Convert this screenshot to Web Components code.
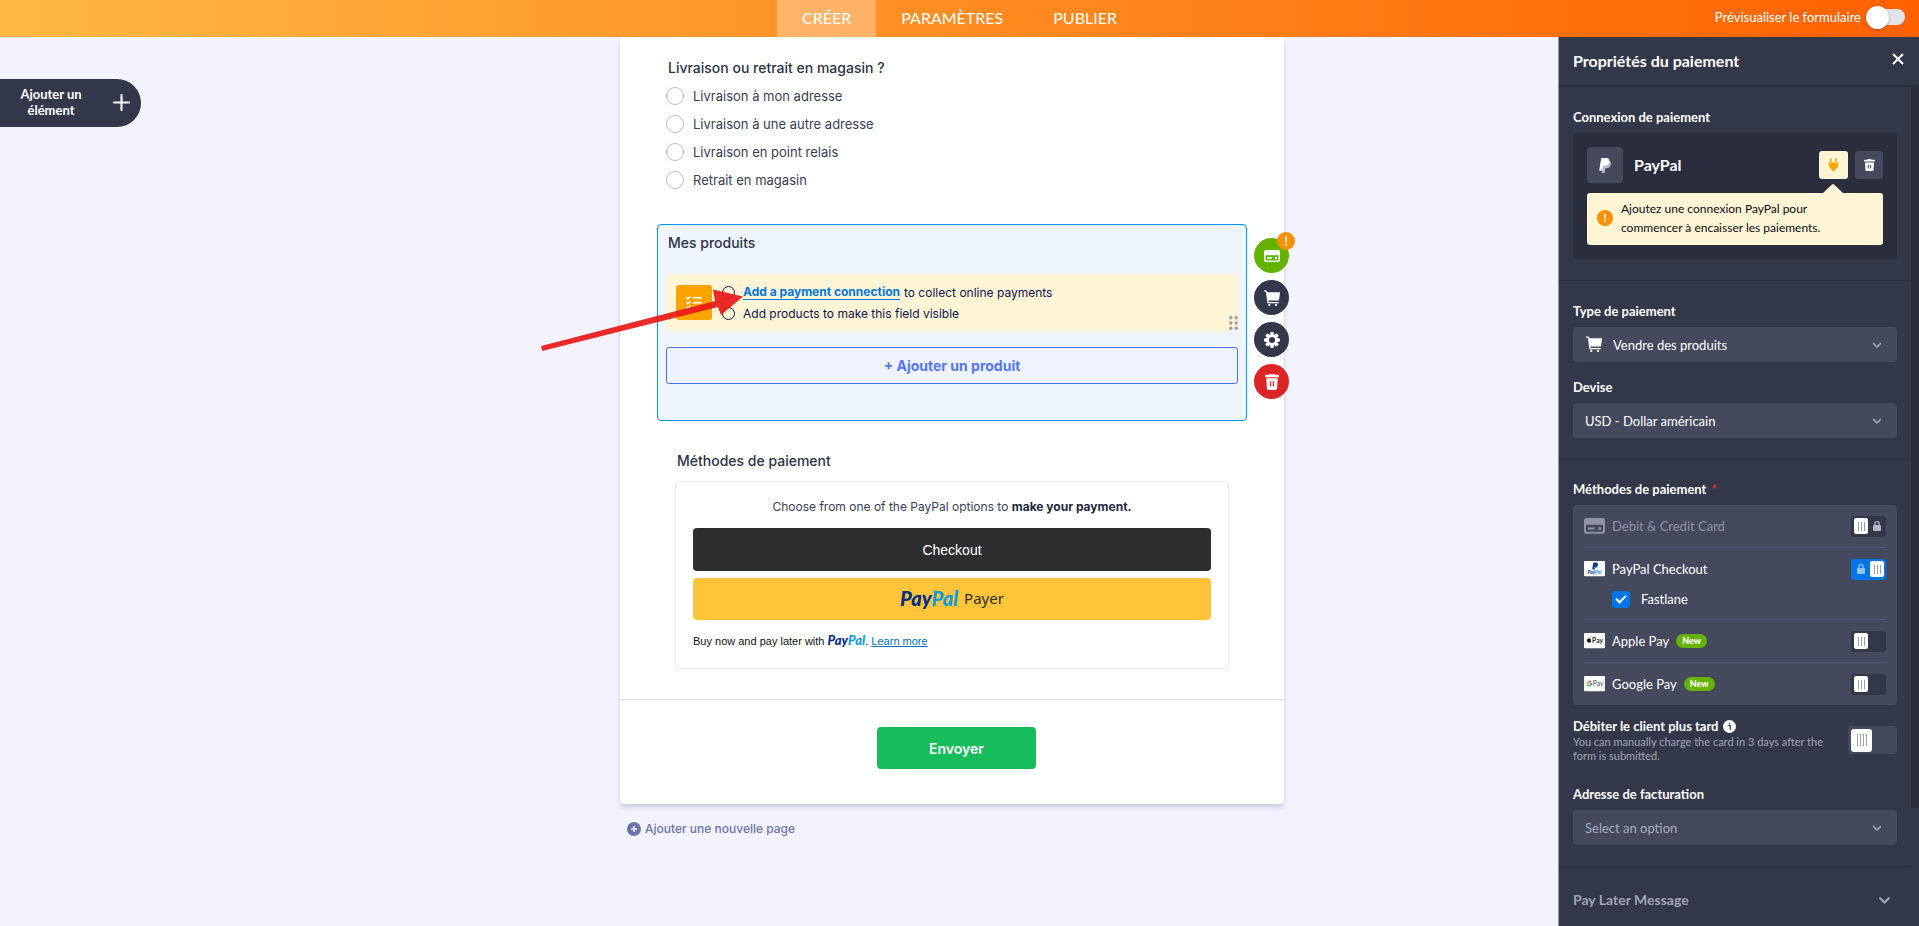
<!DOCTYPE html>
<html lang="fr">
<head>
<meta charset="utf-8">
<meta name="viewport" content="width=device-width, initial-scale=1">
<title>Créer le formulaire</title>
<style>
    html, body {
        height: 100%;
        margin: 0;
    }
    body {
        overflow: hidden;
        font-family: Inter, "Liberation Sans", sans-serif;
        background: #f3f3fe;
    }
</style>
</head>
<body>
<form-builder></form-builder>

<script>
const ICONS = {
    plus: `<svg viewBox="0 0 16 16"><path d="M8 1v14M1 8h14" fill="none" stroke="currentColor" stroke-width="2" stroke-linecap="round"/></svg>`,
    close: `<svg viewBox="0 0 12 12"><path d="M1 1l10 10M11 1L1 11" fill="none" stroke="currentColor" stroke-width="2"/></svg>`,
    chevron: `<svg viewBox="0 0 12 8"><path d="M2 2l4 4 4-4" fill="none" stroke="currentColor" stroke-width="2" stroke-linecap="round" stroke-linejoin="round"/></svg>`,
    card: `<svg viewBox="0 0 16 12"><path fill="currentColor" fill-rule="evenodd" d="M2 0h12a2 2 0 0 1 2 2v8a2 2 0 0 1-2 2H2a2 2 0 0 1-2-2V2a2 2 0 0 1 2-2zM1.500 5.200v4.300a1 1 0 0 0 1 1h11a1 1 0 0 0 1-1V5.200zM3 7.200h5v1.500H3zM11 7h2v2h-2z"/></svg>`,
    cart: `<svg viewBox="0 0 16 16"><path d="M.6.8l1.900.5L4 12.600h10.300" fill="none" stroke="currentColor" stroke-width="1.300" stroke-linejoin="round" stroke-linecap="round"/><path d="M2.600 2.200H15.400a.6.6 0 0 1 .6.700L15 9.700a1 1 0 0 1-1 .9H3.900z" fill="currentColor"/><circle cx="5.300" cy="14.900" r="1.100" fill="currentColor"/><circle cx="12" cy="14.900" r="1.100" fill="currentColor"/></svg>`,
    gear: `<svg viewBox="0 0 16 16"><g fill="currentColor"><circle cx="8" cy="8" r="6"/><rect x="6.200" width="3.600" height="16" rx="1.200"/><rect x="6.200" width="3.600" height="16" rx="1.200" transform="rotate(45 8 8)"/><rect x="6.200" width="3.600" height="16" rx="1.200" transform="rotate(90 8 8)"/><rect x="6.200" width="3.600" height="16" rx="1.200" transform="rotate(135 8 8)"/></g><circle cx="8" cy="8" r="3" fill="#33374a"/></svg>`,
    trash: `<svg viewBox="0 0 14 16"><path fill="currentColor" fill-rule="evenodd" d="M5 0h4l.6.8H13a.8.8 0 0 1 .8.8v1.600H.2V1.600A.8.8 0 0 1 1 .8h3.400zM1.300 4.300h11.400l-.6 10a2 2 0 0 1-2 1.700H3.900a2 2 0 0 1-2-1.700zM4.900 7.200v5h1.300v-5zM7.800 7.200v5h1.300v-5z"/></svg>`,
    plug: `<svg viewBox="0 0 12 15"><path fill="currentColor" d="M2.500.8a.8.8 0 0 1 1.600 0V4H2.500zM7.900.8a.8.8 0 0 1 1.600 0V4H7.900zM.6 4.800h10.800a.6.6 0 0 1 .2 1.200L10.800 6.400v2.200c0 1.700-1.300 3-2.800 3.400L6.900 14.300a1 1 0 0 1-1.800 0L4 12C2.500 11.600 1.200 10.300 1.200 8.600V6.400L.4 6a.6.6 0 0 1 .2-1.200z"/></svg>`,
    lock: `<svg viewBox="0 0 8 10"><path fill="currentColor" d="M0 5a1 1 0 0 1 1-1h6a1 1 0 0 1 1 1v4a1 1 0 0 1-1 1H1a1 1 0 0 1-1-1z"/><path d="M1.900 5V2.800a2.100 2.100 0 0 1 4.200 0V5" fill="none" stroke="currentColor" stroke-width="1.300"/></svg>`,
    alert: `<svg viewBox="0 0 18 18"><circle cx="9" cy="9" r="9" fill="#f99100"/><path d="M8 4.500h2l-.4 5.800H8.400z" fill="#fff"/><circle cx="9" cy="12.700" r="1.100" fill="#fff"/></svg>`,
    info: `<svg viewBox="0 0 14 14"><circle cx="7" cy="7" r="7" fill="#fff"/><path d="M5.600 6h2.200v4.500M7 3.200v1.600" fill="none" stroke="#44495e" stroke-width="1.500"/></svg>`,
    addPage: `<svg viewBox="0 0 14 14"><circle cx="7" cy="7" r="7" fill="currentColor"/><path d="M7 4v6M4 7h6" stroke="#f3f3fe" stroke-width="1.500"/></svg>`,
    list: `<svg viewBox="0 0 16 13"><g fill="none" stroke="currentColor" stroke-width="1.500" stroke-linecap="round" stroke-linejoin="round"><path d="M.8 1.800l1 1L4 .8M.8 6.800l1 1L4 5.800M.8 11.400l1 1L4 10.400M7 1.800h8.200M7 6.800h8.200M7 11.600h8.200"/></g></svg>`,
    dots: `<svg viewBox="0 0 9 14"><g fill="#9d9fb0"><circle cx="1.800" cy="1.800" r="1.700"/><circle cx="7.200" cy="1.800" r="1.700"/><circle cx="1.800" cy="7" r="1.700"/><circle cx="7.200" cy="7" r="1.700"/><circle cx="1.800" cy="12.200" r="1.700"/><circle cx="7.200" cy="12.200" r="1.700"/></g></svg>`,
    paypal: `<svg viewBox="0 0 12 15"><path fill="#b9bcc9" d="M5 3h4.500C11.500 3 12.300 4.600 11.900 6.600 11.400 9 9.800 10.200 7.500 10.200H6.300L5.500 15H2.800z"/><path fill="#fff" d="M2.600 0h4.700c2.400 0 3.500 1.400 3.100 3.700C9.900 6.500 8.300 7.600 5.800 7.600H4.300L3.300 12.800H.2L2.100.5C2.100.2 2.300 0 2.600 0z"/></svg>`,
    logoPaypal: `<svg viewBox="0 0 22 16"><rect width="22" height="16" rx="1" fill="#fff"/><path fill="#1f9ad6" d="M11 4h2.600c1.400.6 1.100 3.200-1.600 3.400L11.500 9.600H9.700z"/><path fill="#1b3a80" d="M9.700 1.600h2.900c1.700 0 2.300 1 2 2.300-.3 1.500-1.400 2-2.800 2h-.9L10.400 8.700H8.600z"/><text x="11" y="14" text-anchor="middle" font-family="Lato, sans-serif" font-size="5" font-weight="900" font-style="italic" fill="#1b3a80">Pay<tspan fill="#1f9ad6">Pal</tspan></text></svg>`,
    logoApple: `<svg viewBox="0 0 22 16"><rect width="22" height="16" rx="1" fill="#fff"/><path fill="#111" d="M5.900 4.400c.2-.5.600-.8 1-.9 0 .6-.4 1.200-1 1.300zM3.200 7.600c0-1.500 1.300-2.200 2.300-1.700.7-.4 1.400-.3 1.900.3-.8.6-.7 1.800.2 2.300-.3.900-.9 1.900-1.500 1.700-.4-.2-.7-.2-1.100 0C4.100 10.400 3.200 9 3.200 7.600z"/><text x="8.500" y="10.400" font-family="Lato, sans-serif" font-size="7" font-weight="700" fill="#222">Pay</text></svg>`,
    logoGoogle: `<svg viewBox="0 0 22 16"><rect width="22" height="16" rx="1" fill="#fff"/><g fill="none" stroke-width="1.300"><path d="M7.400 6.500A2.300 2.300 0 0 0 3.700 6.900" stroke="#ea4335"/><path d="M3.700 6.900A2.300 2.300 0 0 0 3.700 9.100" stroke="#fbbc05"/><path d="M3.700 9.100A2.300 2.300 0 0 0 7.200 9.700" stroke="#34a853"/><path d="M7.200 9.700A2.300 2.300 0 0 0 8 8H5.700" stroke="#4285f4"/></g><text x="9.200" y="10.500" font-family="Lato, sans-serif" font-size="7" font-weight="400" fill="#444">Pay</text></svg>`
};

class AppIcon extends HTMLElement {
    constructor() {
        super();
        this.attachShadow({mode: "open"});
    }

    connectedCallback() {
        this.shadowRoot.innerHTML = `
            <style>
                :host {
                    display: inline-flex;
                    flex: none;
                    width: 16px;
                }
                svg {
                    display: block;
                    width: 100%;
                    height: auto;
                }
            </style>
            ${ICONS[this.getAttribute("name")]}`;
    }
}

class PaypalWordmark extends HTMLElement {
    constructor() {
        super();
        this.attachShadow({mode: "open"}).innerHTML = `
            <style>
                :host {
                    display: inline-block;
                    font-family: Lato, sans-serif;
                    font-weight: 900;
                    font-style: italic;
                    color: #012f86;
                }
                span {
                    color: #0f9bdc;
                }
            </style>Pay<span>Pal</span>`;
    }
}

class BuilderHeader extends HTMLElement {
    constructor() {
        super();
        this.attachShadow({mode: "open"}).innerHTML = `
            <style>
                :host {
                    display: grid;
                    grid-template-columns: 1fr auto 1fr;
                    height: 37px;
                    font-family: Lato, sans-serif;
                    color: #fff;
                    background: linear-gradient(90deg, #ffb843, #ff6100);
                }
                nav {
                    grid-column: 2;
                    display: flex;
                }
                a {
                    display: flex;
                    align-items: center;
                    padding: 0 25px 3px;
                    font-size: 16px;
                    color: inherit;
                    text-decoration: none;
                }
                a[aria-current] {
                    background: rgba(255, 255, 255, 0.3);
                }
                label {
                    display: flex;
                    align-items: center;
                    justify-content: flex-end;
                    gap: 5px;
                    padding: 0 14px 3px 0;
                    font-size: 13px;
                }
                input {
                    appearance: none;
                    display: flex;
                    align-items: center;
                    width: 35px;
                    height: 16px;
                    margin: 0 0 0 4px;
                    border-radius: 8px;
                    background: #e3e3ea;
                }
                input::before {
                    content: "";
                    flex: none;
                    width: 23px;
                    height: 23px;
                    margin-left: -4px;
                    border-radius: 50%;
                    background: #fff;
                    box-shadow: 0 1px 3px rgba(0, 0, 0, 0.3);
                }
            </style>
            <nav>
                <a href="#creer" aria-current="page">CRÉER</a>
                <a href="#parametres">PARAMÈTRES</a>
                <a href="#publier">PUBLIER</a>
            </nav>
            <label>Prévisualiser le formulaire <input type="checkbox" role="switch"></label>`;
    }
}

class AddElementButton extends HTMLElement {
    constructor() {
        super();
        this.attachShadow({mode: "open"}).innerHTML = `
            <style>
                :host {
                    display: block;
                }
                button {
                    display: flex;
                    align-items: center;
                    gap: 20px;
                    height: 48px;
                    padding: 0 11px 2px 9px;
                    border: 0;
                    border-radius: 0 24px 24px 0;
                    font: 700 13px/16px Lato, sans-serif;
                    color: #fff;
                    background: #33374a;
                }
                span {
                    width: 84px;
                }
                app-icon {
                    width: 17px;
                }
            </style>
            <button type="button"><span>Ajouter un élément</span><app-icon name="plus"></app-icon></button>`;
    }
}

class ChoiceQuestion extends HTMLElement {
    constructor() {
        super();
        this.attachShadow({mode: "open"});
    }

    connectedCallback() {
        const options = this.getAttribute("options").split("|");
        this.shadowRoot.innerHTML = `
            <style>
                :host {
                    display: block;
                    padding: 0 9px;
                }
                fieldset {
                    margin: 0;
                    padding: 0;
                    border: 0;
                }
                legend {
                    padding: 0 0 4px 2px;
                    font-size: 14px;
                    font-weight: 500;
                    line-height: 20px;
                    color: #2c3345;
                }
                label {
                    display: flex;
                    align-items: center;
                    gap: 9px;
                    height: 28px;
                    font-size: 13px;
                    color: #3a4052;
                }
                input {
                    appearance: none;
                    box-sizing: border-box;
                    width: 18px;
                    height: 18px;
                    margin: 0;
                    border: 1px solid #b8bdcc;
                    border-radius: 50%;
                    background: #fff;
                }
            </style>
            <fieldset>
                <legend>${this.getAttribute("question")}</legend>
                ${options.map(option => `<label><input type="radio" name="choice"><span>${option}</span></label>`).join("")}
            </fieldset>`;
    }
}

class FieldTool extends HTMLElement {
    constructor() {
        super();
        this.attachShadow({mode: "open"});
    }

    connectedCallback() {
        this.shadowRoot.innerHTML = `
            <style>
                :host {
                    display: block;
                    position: relative;
                }
                button {
                    display: flex;
                    align-items: center;
                    justify-content: center;
                    width: 35px;
                    height: 35px;
                    padding: 0;
                    border: 0;
                    border-radius: 50%;
                    color: #fff;
                    background: var(--tool-color, #33374a);
                }
                button app-icon {
                    width: var(--tool-icon, 16px);
                }
                ::slotted(app-icon) {
                    position: absolute;
                    top: -6px;
                    right: -6px;
                    width: 18px;
                }
            </style>
            <button type="button" aria-label="${this.getAttribute("label")}"><app-icon name="${this.getAttribute("icon")}"></app-icon></button>
            <slot></slot>`;
    }
}

class ProductField extends HTMLElement {
    constructor() {
        super();
        this.attachShadow({mode: "open"}).innerHTML = `
            <style>
                :host {
                    display: block;
                    position: relative;
                    box-sizing: border-box;
                    padding: 8px 8px 36px;
                    border: 1px solid #0099ff;
                    border-radius: 4px;
                    background: #eef5ff;
                }
                h2 {
                    margin: 0 2px 21px;
                    font-size: 14px;
                    font-weight: 500;
                    line-height: 20px;
                    color: #2c3345;
                }
                .notice {
                    position: relative;
                    display: flex;
                    align-items: center;
                    height: 57px;
                    padding-left: 10px;
                    border-radius: 4px;
                    background: #fff4d3;
                }
                .badge {
                    display: flex;
                    align-items: center;
                    justify-content: center;
                    width: 36px;
                    height: 35px;
                    border-radius: 3px;
                    color: #fff;
                    background: #fba400;
                }
                ul {
                    margin: 0;
                    padding: 0 0 0 10px;
                    list-style: none;
                }
                li {
                    display: flex;
                    align-items: center;
                    height: 21px;
                    font-size: 12px;
                    color: #0a1551;
                }
                li::before {
                    content: "";
                    box-sizing: border-box;
                    width: 13px;
                    height: 13px;
                    margin-right: 8px;
                    border: 1px solid #0a1551;
                    border-radius: 50%;
                }
                a {
                    margin-right: 4px;
                    border-bottom: 1px solid #0075e3;
                    font-weight: 700;
                    color: #0075e3;
                    text-decoration: none;
                }
                .grip {
                    position: absolute;
                    right: 0;
                    bottom: 1px;
                    width: 9px;
                }
                .add {
                    display: block;
                    width: 100%;
                    height: 37px;
                    margin-top: 16px;
                    border: 1px solid #4573e3;
                    border-radius: 3px;
                    font: 700 14px Inter, sans-serif;
                    color: #5277ee;
                    background: #eef3ff;
                }
                .tools {
                    position: absolute;
                    top: 13px;
                    left: 100%;
                    display: grid;
                    gap: 7px;
                    margin-left: 8px;
                }
                .pay {
                    --tool-color: #64b200;
                }
                .remove {
                    --tool-color: #dc2626;
                    --tool-icon: 14px;
                }
                .arrow {
                    position: absolute;
                    top: 64px;
                    left: -117px;
                    width: 204px;
                    height: 64px;
                    pointer-events: none;
                }
            </style>
            <h2>Mes produits</h2>
            <div class="notice">
                <div class="badge"><app-icon name="list"></app-icon></div>
                <ul>
                    <li><a href="#connexion">Add a payment connection</a><span>to collect online payments</span></li>
                    <li>Add products to make this field visible</li>
                </ul>
                <app-icon class="grip" name="dots"></app-icon>
            </div>
            <button class="add" type="button">+ Ajouter un produit</button>
            <div class="tools">
                <field-tool class="pay" icon="card" label="Paiement"><app-icon name="alert"></app-icon></field-tool>
                <field-tool icon="cart" label="Produits"></field-tool>
                <field-tool icon="gear" label="Propriétés"></field-tool>
                <field-tool class="remove" icon="trash" label="Supprimer"></field-tool>
            </div>
            <svg class="arrow" viewBox="0 0 204 64"><path fill="#e91818" fill-opacity="0.92" d="M0 57L174 12L172 0.500L202 7.500L180 26L177 18L1 62Z"/></svg>`;
    }
}

class PaymentMethods extends HTMLElement {
    constructor() {
        super();
        this.attachShadow({mode: "open"}).innerHTML = `
            <style>
                :host {
                    display: block;
                    padding: 0 18px;
                }
                h2 {
                    margin: 0 0 10px 2px;
                    font-size: 14px;
                    font-weight: 500;
                    line-height: 20px;
                    color: #2c3345;
                }
                .box {
                    padding: 15px 17px 18px;
                    border: 1px solid #ececf0;
                    border-radius: 3px;
                }
                p {
                    margin: 0 0 11px;
                    font-size: 12px;
                    line-height: 20px;
                    text-align: center;
                    color: #3a4052;
                }
                b {
                    color: #23283a;
                }
                button {
                    display: flex;
                    align-items: center;
                    justify-content: center;
                    gap: 6px;
                    width: 100%;
                    border: 0;
                    border-radius: 4px;
                }
                .checkout {
                    height: 43px;
                    margin-bottom: 7px;
                    font: 14px "Liberation Sans", Arial, sans-serif;
                    color: #fff;
                    background: #2c2e2f;
                }
                .paypal {
                    height: 42px;
                    margin-bottom: 10px;
                    padding-bottom: 3px;
                    font: 15px "Noto Sans", sans-serif;
                    color: #2c2e2f;
                    background: #ffc43a;
                }
                .paypal paypal-wordmark {
                    font-size: 20px;
                }
                .later {
                    height: 20px;
                    margin: 0;
                    font: 11px/20px "Liberation Sans", Arial, sans-serif;
                    text-align: left;
                    color: #111;
                }
                .later paypal-wordmark {
                    font-size: 13px;
                }
                a {
                    color: #0070ba;
                }
            </style>
            <h2>Méthodes de paiement</h2>
            <div class="box">
                <p>Choose from one of the PayPal options to <b>make your payment.</b></p>
                <button class="checkout" type="button">Checkout</button>
                <button class="paypal" type="button"><paypal-wordmark></paypal-wordmark><span>Payer</span></button>
                <p class="later">Buy now and pay later with <paypal-wordmark></paypal-wordmark>. <a href="#learn">Learn more</a></p>
            </div>`;
    }
}

class FormSheet extends HTMLElement {
    constructor() {
        super();
        this.attachShadow({mode: "open"}).innerHTML = `
            <style>
                :host {
                    display: block;
                    width: 100%;
                    max-width: 664px;
                }
                .sheet {
                    border-radius: 0 0 4px 4px;
                    background: #fff;
                    box-shadow: 0 4px 4px rgba(87, 100, 126, 0.21), 0 0 2px rgba(87, 100, 126, 0.2);
                }
                .fields {
                    display: grid;
                    padding: 21px 37px 30px;
                }
                ::slotted(product-field) {
                    margin: 30px 0;
                }
                .submit {
                    display: flex;
                    justify-content: center;
                    padding: 27px 28px 35px 37px;
                    border-top: 1px solid #e3e3f0;
                }
                .submit button {
                    width: 159px;
                    height: 42px;
                    border: 0;
                    border-radius: 4px;
                    font: 600 14px Inter, sans-serif;
                    color: #fff;
                    background: #18bd5b;
                }
                .page {
                    display: flex;
                    align-items: center;
                    gap: 4px;
                    margin: 15px 0 0 7px;
                    padding: 0;
                    border: 0;
                    font: 500 12px/20px Inter, sans-serif;
                    color: #6c73a8;
                    background: none;
                }
                .page app-icon {
                    width: 14px;
                }
            </style>
            <div class="sheet">
                <div class="fields"><slot></slot></div>
                <div class="submit"><button type="submit">Envoyer</button></div>
            </div>
            <button class="page" type="button"><app-icon name="addPage"></app-icon>Ajouter une nouvelle page</button>`;
    }
}

class PanelSelect extends HTMLElement {
    constructor() {
        super();
        this.attachShadow({mode: "open"});
    }

    connectedCallback() {
        const icon = this.getAttribute("icon");
        this.shadowRoot.innerHTML = `
            <style>
                :host {
                    display: block;
                }
                label {
                    display: block;
                    margin-bottom: 7px;
                    font-size: 13px;
                    font-weight: 700;
                    line-height: 18px;
                }
                .box {
                    position: relative;
                }
                select {
                    appearance: none;
                    display: block;
                    width: 100%;
                    height: 35px;
                    padding: 0 30px 0 ${icon ? 40 : 12}px;
                    border: 0;
                    border-radius: 4px;
                    font: inherit;
                    font-size: 13px;
                    color: var(--select-color, #fff);
                    background: #44495e;
                }
                app-icon {
                    position: absolute;
                    top: 9px;
                    left: 13px;
                    pointer-events: none;
                }
                .chevron {
                    top: 15px;
                    left: auto;
                    right: 15px;
                    width: 10px;
                    color: #a0a4b8;
                }
            </style>
            <label for="field">${this.getAttribute("label")}</label>
            <div class="box">
                ${icon ? `<app-icon name="${icon}"></app-icon>` : ""}
                <select id="field"><option>${this.getAttribute("value")}</option></select>
                <app-icon class="chevron" name="chevron"></app-icon>
            </div>`;
    }
}

class SlideSwitch extends HTMLElement {
    constructor() {
        super();
        this.attachShadow({mode: "open"});
    }

    connectedCallback() {
        const checked = this.hasAttribute("checked");
        this.shadowRoot.innerHTML = `
            <style>
                :host {
                    display: block;
                    flex: none;
                    position: relative;
                }
                input {
                    appearance: none;
                    box-sizing: border-box;
                    display: flex;
                    align-items: center;
                    width: 35px;
                    height: 21px;
                    margin: 0;
                    padding: 0 2px 0 3px;
                    border-radius: 3px;
                    background: #33374a;
                }
                input:checked {
                    justify-content: flex-end;
                    background: #0075e3;
                }
                input::before {
                    content: "";
                    width: 14px;
                    height: 16px;
                    border-radius: 2px;
                    background: repeating-linear-gradient(90deg, #9a9eb2 0 1px, transparent 1px 3px) center / 7px 9px no-repeat, #fff;
                }
                :host([large]) input {
                    width: 49px;
                    height: 28px;
                    border-radius: 4px;
                    background: #44495e;
                }
                :host([large]) input::before {
                    width: 21px;
                    height: 23px;
                    border-radius: 3px;
                    background-size: 10px 12px, auto;
                }
                app-icon {
                    position: absolute;
                    top: 5px;
                    ${checked ? "left: 6px" : "right: 5px"};
                    width: 8px;
                    color: ${checked ? "#8fc2f5" : "#b4b6c0"};
                    pointer-events: none;
                }
            </style>
            <input type="checkbox" role="switch" aria-label="${this.getAttribute("label")}" ${checked ? "checked" : ""}>
            ${this.hasAttribute("locked") ? `<app-icon name="lock"></app-icon>` : ""}`;
    }
}

class MethodRow extends HTMLElement {
    constructor() {
        super();
        this.attachShadow({mode: "open"});
    }

    connectedCallback() {
        const name = this.getAttribute("name");
        const flags = ["locked", "checked"].filter(flag => this.hasAttribute(flag)).join(" ");
        this.shadowRoot.innerHTML = `
            <style>
                :host {
                    display: block;
                    border-bottom: 1px solid #4c5775;
                    font-size: 13px;
                }
                :host(:last-of-type) {
                    border-bottom: 0;
                }
                .row {
                    display: flex;
                    align-items: center;
                    gap: 7px;
                    height: 42px;
                }
                .row app-icon {
                    width: 21px;
                }
                :host([disabled]) app-icon,
                :host([disabled]) .name {
                    color: #8f92a2;
                }
                .new {
                    padding: 0 6px;
                    border-radius: 7px;
                    font-size: 9px;
                    font-weight: 900;
                    line-height: 14px;
                    background: #64b200;
                }
                slide-switch {
                    margin-left: auto;
                }
            </style>
            <div class="row">
                <app-icon name="${this.getAttribute("icon")}"></app-icon>
                <span class="name">${name}</span>
                ${this.hasAttribute("new") ? `<span class="new">New</span>` : ""}
                <slide-switch label="${name}" ${flags}></slide-switch>
            </div>
            <slot></slot>`;
    }
}

class TickOption extends HTMLElement {
    constructor() {
        super();
        this.attachShadow({mode: "open"}).innerHTML = `
            <style>
                :host {
                    display: block;
                    padding: 0 0 11px 28px;
                }
                label {
                    display: flex;
                    align-items: center;
                    gap: 11px;
                    height: 18px;
                }
                input {
                    appearance: none;
                    display: grid;
                    place-items: center;
                    width: 18px;
                    height: 17px;
                    margin: 0;
                    border-radius: 3px;
                    background: #0075e3;
                }
                input::before {
                    content: "";
                    width: 4px;
                    height: 8px;
                    margin-top: -3px;
                    border: solid #fff;
                    border-width: 0 2px 2px 0;
                    transform: rotate(45deg);
                }
            </style>
            <label><input type="checkbox" checked><slot></slot></label>`;
    }
}

class ConnectionCard extends HTMLElement {
    constructor() {
        super();
        this.attachShadow({mode: "open"}).innerHTML = `
            <style>
                :host {
                    display: block;
                    padding: 14px;
                    border-radius: 4px;
                    background: #2a2d3b;
                }
                .row {
                    display: flex;
                    align-items: center;
                    gap: 7px;
                    margin-bottom: 10px;
                }
                .logo {
                    display: flex;
                    align-items: center;
                    justify-content: center;
                    width: 36px;
                    height: 36px;
                    margin-right: 4px;
                    border-radius: 4px;
                    background: #44495e;
                }
                .logo app-icon {
                    width: 12px;
                }
                .name {
                    flex: 1;
                    padding-bottom: 2px;
                    font-size: 16px;
                    font-weight: 700;
                }
                button {
                    display: flex;
                    align-items: center;
                    justify-content: center;
                    width: 28px;
                    height: 28px;
                    padding: 0;
                    border: 0;
                    border-radius: 3px;
                    color: #fff;
                    background: #44495e;
                }
                button app-icon {
                    width: 11px;
                }
                .connect {
                    width: 29px;
                    color: #fba400;
                    background: #fff4d3;
                }
                .tip {
                    position: relative;
                    display: flex;
                    align-items: center;
                    gap: 8px;
                    padding: 6px 10px 8px;
                    border-radius: 3px;
                    font-size: 12px;
                    line-height: 19px;
                    color: #0b0c14;
                    background: #fff4d3;
                }
                .tip::before {
                    content: "";
                    position: absolute;
                    right: 40px;
                    top: -9px;
                    width: 20px;
                    height: 9px;
                    background: #fff4d3;
                    clip-path: polygon(0 100%, 42% 10%, 50% 0, 58% 10%, 100% 100%);
                }
            </style>
            <div class="row">
                <div class="logo"><app-icon name="paypal"></app-icon></div>
                <span class="name">PayPal</span>
                <button class="connect" type="button" aria-label="Connecter"><app-icon name="plug"></app-icon></button>
                <button type="button" aria-label="Supprimer"><app-icon name="trash"></app-icon></button>
            </div>
            <div class="tip">
                <app-icon name="alert"></app-icon>
                <span>Ajoutez une connexion PayPal pour<br>commencer à encaisser les paiements.</span>
            </div>`;
    }
}

class PropertiesPanel extends HTMLElement {
    constructor() {
        super();
        this.attachShadow({mode: "open"}).innerHTML = `
            <style>
                :host {
                    display: flex;
                    flex-direction: column;
                    box-sizing: border-box;
                    width: 361px;
                    min-height: 0;
                    border-left: 1px solid #9497a8;
                    font-family: Lato, sans-serif;
                    color: #fff;
                    background: #33374a;
                }
                header {
                    display: flex;
                    align-items: center;
                    justify-content: space-between;
                    box-sizing: border-box;
                    height: 48px;
                    padding: 0 15px 2px 14px;
                }
                h1 {
                    margin: 0;
                    font-size: 16px;
                    font-weight: 700;
                }
                header button,
                summary {
                    padding: 0;
                    border: 0;
                    color: inherit;
                    background: none;
                }
                header app-icon {
                    width: 12px;
                }
                .scroll {
                    flex: 1;
                    display: flex;
                    min-height: 0;
                }
                .body {
                    flex: 1;
                    overflow: hidden;
                    border-top: 2px solid #2a2d3b;
                }
                .rail {
                    width: 8px;
                }
                .thumb {
                    height: 86%;
                    background: #2a2d3b;
                }
                section {
                    padding: 21px 14px;
                    border-bottom: 1px solid #2a2d3b;
                }
                h2 {
                    margin: 0 0 7px;
                    font-size: 13px;
                    font-weight: 700;
                    line-height: 18px;
                }
                .required {
                    margin-left: 2px;
                    color: #e02b2b;
                }
                .basics {
                    display: grid;
                    gap: 16px;
                    padding-bottom: 20px;
                }
                .methods {
                    padding: 0 11px;
                    border-radius: 4px;
                    background: #44495e;
                }
                .charge {
                    display: flex;
                    align-items: center;
                    justify-content: space-between;
                    margin: 12px 0 22px;
                }
                .charge h2 {
                    display: flex;
                    align-items: center;
                    gap: 4px;
                    margin: 0;
                }
                .charge app-icon {
                    width: 13px;
                }
                .charge p {
                    max-width: 255px;
                    margin: 0;
                    font-size: 11px;
                    line-height: 14px;
                    color: #a0a4b4;
                }
                .billing {
                    --select-color: #a8abbb;
                }
                summary {
                    display: flex;
                    align-items: center;
                    justify-content: space-between;
                    padding: 22px 20px 22px 14px;
                    font-size: 14px;
                    font-weight: 700;
                    line-height: 22px;
                    color: #a0a4b4;
                }
                summary app-icon {
                    width: 13px;
                }
            </style>
            <header>
                <h1>Propriétés du paiement</h1>
                <button type="button" aria-label="Fermer"><app-icon name="close"></app-icon></button>
            </header>
            <div class="scroll">
                <div class="body">
                    <section>
                        <h2>Connexion de paiement</h2>
                        <connection-card></connection-card>
                    </section>
                    <section class="basics">
                        <panel-select label="Type de paiement" icon="cart" value="Vendre des produits"></panel-select>
                        <panel-select label="Devise" value="USD - Dollar américain"></panel-select>
                    </section>
                    <section>
                        <h2>Méthodes de paiement <span class="required">*</span></h2>
                        <div class="methods">
                            <method-row name="Debit &amp; Credit Card" icon="card" locked disabled></method-row>
                            <method-row name="PayPal Checkout" icon="logoPaypal" locked checked><tick-option>Fastlane</tick-option></method-row>
                            <method-row name="Apple Pay" icon="logoApple" new></method-row>
                            <method-row name="Google Pay" icon="logoGoogle" new></method-row>
                        </div>
                        <div class="charge">
                            <div>
                                <h2>Débiter le client plus tard <app-icon name="info"></app-icon></h2>
                                <p>You can manually charge the card in 3 days after the form is submitted.</p>
                            </div>
                            <slide-switch large label="Débiter le client plus tard"></slide-switch>
                        </div>
                        <panel-select class="billing" label="Adresse de facturation" value="Select an option"></panel-select>
                    </section>
                    <details>
                        <summary>Pay Later Message <app-icon name="chevron"></app-icon></summary>
                    </details>
                </div>
                <div class="rail"><div class="thumb"></div></div>
            </div>`;
    }
}

class FormBuilder extends HTMLElement {
    constructor() {
        super();
        this.attachShadow({mode: "open"}).innerHTML = `
            <style>
                :host {
                    display: grid;
                    grid-template-rows: auto minmax(0, 1fr);
                    height: 100vh;
                }
                /* the side panel and the add button float over the canvas, so all share one cell */
                main {
                    display: grid;
                    grid-template: minmax(0, 1fr) / minmax(0, 1fr);
                }
                .canvas,
                add-element-button,
                properties-panel {
                    grid-area: 1 / 1;
                }
                .canvas {
                    display: flex;
                    justify-content: center;
                    align-items: flex-start;
                    overflow: hidden;
                    padding-right: 15px;
                }
                add-element-button {
                    place-self: start;
                    margin-top: 42px;
                }
                properties-panel {
                    justify-self: end;
                    z-index: 1;
                }
            </style>
            <builder-header></builder-header>
            <main>
                <div class="canvas">
                    <form-sheet>
                        <choice-question question="Livraison ou retrait en magasin ?" options="Livraison à mon adresse|Livraison à une autre adresse|Livraison en point relais|Retrait en magasin"></choice-question>
                        <product-field></product-field>
                        <payment-methods></payment-methods>
                    </form-sheet>
                </div>
                <add-element-button></add-element-button>
                <properties-panel></properties-panel>
            </main>`;
    }
}

customElements.define("app-icon", AppIcon);
customElements.define("paypal-wordmark", PaypalWordmark);
customElements.define("builder-header", BuilderHeader);
customElements.define("add-element-button", AddElementButton);
customElements.define("choice-question", ChoiceQuestion);
customElements.define("field-tool", FieldTool);
customElements.define("product-field", ProductField);
customElements.define("payment-methods", PaymentMethods);
customElements.define("form-sheet", FormSheet);
customElements.define("panel-select", PanelSelect);
customElements.define("slide-switch", SlideSwitch);
customElements.define("method-row", MethodRow);
customElements.define("tick-option", TickOption);
customElements.define("connection-card", ConnectionCard);
customElements.define("properties-panel", PropertiesPanel);
customElements.define("form-builder", FormBuilder);
</script>
</body>
</html>
